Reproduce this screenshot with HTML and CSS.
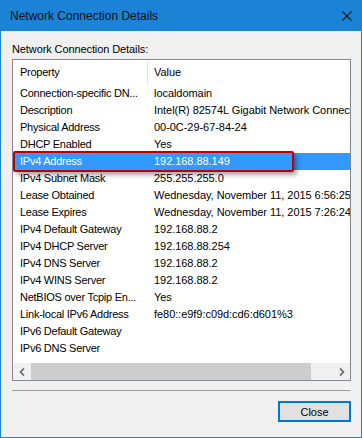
FILE: index.html
```html
<!DOCTYPE html>
<html lang="en">
<head>
    <meta charset="UTF-8">
    <title>Network Connection Details</title>
    <link rel="stylesheet" href="styles.css">
</head>
<body>
    <div class="window">
        <div class="titlebar">
            <span class="title">Network Connection Details</span>
            <svg class="close-x" width="10" height="10" viewBox="0 0 10 10">
                <path d="M0.5 0.5 L9.5 9.5 M9.5 0.5 L0.5 9.5" stroke="#1a1a1a" stroke-width="1.1" fill="none"/>
            </svg>
        </div>

        <div class="content">
            <p class="label">Network Connection Details:</p>

            <div class="listbox">
                <div class="list-head">
                    <div class="col-prop">Property</div>
                    <div class="col-val">Value</div>
                </div>

                <div class="rows">
                    <div class="row"><div class="col-prop">Connection-specific DN...</div><div class="col-val">localdomain</div></div>
                    <div class="row"><div class="col-prop">Description</div><div class="col-val">Intel(R) 82574L Gigabit Network Connection</div></div>
                    <div class="row"><div class="col-prop">Physical Address</div><div class="col-val">00-0C-29-67-84-24</div></div>
                    <div class="row"><div class="col-prop">DHCP Enabled</div><div class="col-val">Yes</div></div>
                    <div class="row selected"><div class="col-prop">IPv4 Address</div><div class="col-val">192.168.88.149</div></div>
                    <div class="row"><div class="col-prop">IPv4 Subnet Mask</div><div class="col-val">255.255.255.0</div></div>
                    <div class="row"><div class="col-prop">Lease Obtained</div><div class="col-val">Wednesday, November 11, 2015 6:56:25 PM</div></div>
                    <div class="row"><div class="col-prop">Lease Expires</div><div class="col-val">Wednesday, November 11, 2015 7:26:24 PM</div></div>
                    <div class="row"><div class="col-prop">IPv4 Default Gateway</div><div class="col-val">192.168.88.2</div></div>
                    <div class="row"><div class="col-prop">IPv4 DHCP Server</div><div class="col-val">192.168.88.254</div></div>
                    <div class="row"><div class="col-prop">IPv4 DNS Server</div><div class="col-val">192.168.88.2</div></div>
                    <div class="row"><div class="col-prop">IPv4 WINS Server</div><div class="col-val">192.168.88.2</div></div>
                    <div class="row"><div class="col-prop">NetBIOS over Tcpip En...</div><div class="col-val">Yes</div></div>
                    <div class="row"><div class="col-prop">Link-local IPv6 Address</div><div class="col-val">fe80::e9f9:c09d:cd6:d601%3</div></div>
                    <div class="row"><div class="col-prop">IPv6 Default Gateway</div><div class="col-val"></div></div>
                    <div class="row"><div class="col-prop">IPv6 DNS Server</div><div class="col-val"></div></div>
                </div>

                <!-- horizontal scrollbar -->
                <div class="hscroll">
                    <div class="arrow">
                        <svg width="6" height="8" viewBox="0 0 6 8"><path d="M5 0.5 L1.5 4 L5 7.5" stroke="#606060" stroke-width="1.6" fill="none"/></svg>
                    </div>
                    <div class="thumb"></div>
                    <div class="track"></div>
                    <div class="arrow">
                        <svg width="6" height="8" viewBox="0 0 6 8"><path d="M1 0.5 L4.5 4 L1 7.5" stroke="#606060" stroke-width="1.6" fill="none"/></svg>
                    </div>
                </div>

                <!-- red annotation round the selected row -->
                <div class="callout"></div>
            </div>

            <div class="separator"></div>

            <div class="buttons">
                <button class="btn">Close</button>
            </div>
        </div>
    </div>
</body>
</html>
```

FILE: styles.css
```css
body {
    margin: 0;
    font-family: "Liberation Sans", Arial, sans-serif;
    color: #000;
}
.window {
    width: 362px;
    height: 438px;
    box-sizing: border-box;
    border: 1px solid #1b82d6;
    border-top: 0;
    background-color: #f0f0f0;
}
.titlebar {
    height: 31px;
    margin: 0 -1px;
    padding: 0 10px 0 10px;
    background-color: #1b82d6;
    display: flex;
    align-items: center;
    justify-content: space-between;
}
.title {
    font-size: 12px;
    color: #111;
}
.content {
    padding: 12px 10px 0 11px;
}
.label {
    margin: 0 0 3px 0;
    font-size: 11px;
    line-height: 13px;
    letter-spacing: -0.1px;
}
.listbox {
    position: relative;
    height: 322px;
    box-sizing: border-box;
    border: 1px solid #828790;
    background-color: #fff;
    font-size: 11px;
    letter-spacing: -0.05px;
    overflow: hidden;
}
.list-head {
    display: flex;
    height: 25px;
    align-items: stretch;
}
.list-head .col-prop {
    border-right: 1px solid #e5e5e5;
    margin-top: 1px;
    line-height: 23px;
}
.list-head .col-val {
    line-height: 25px;
}
.rows {
    height: 278px;
}
.row {
    display: flex;
    height: 17px;
    line-height: 17px;
    white-space: nowrap;
}
.col-prop {
    width: 135px;
    flex-shrink: 0;
    box-sizing: border-box;
    padding-left: 7px;
    letter-spacing: -0.25px;
}
.col-val {
    padding-left: 6px;
    white-space: nowrap;
}
.row.selected {
    background-color: #3399ff;
    color: #fff;
}
.hscroll {
    display: flex;
    height: 17px;
    background-color: #f0f0f0;
}
.arrow {
    width: 17px;
    display: flex;
    align-items: center;
    justify-content: center;
}
.thumb {
    width: 280px;
    margin-left: 1px;
    background-color: #cdcdcd;
}
.track {
    flex: 1;
}
.callout {
    position: absolute;
    left: 0;
    top: 91px;
    width: 281px;
    height: 21px;
    box-sizing: border-box;
    border: 2px solid #c00000;
    border-radius: 2px;
    box-shadow: 3px 3px 4px rgba(0, 0, 0, 0.35);
}
.separator {
    margin: 9px 1px 0 0;
    height: 1px;
    background-color: #a0a0a0;
}
.buttons {
    display: flex;
    justify-content: flex-end;
    padding-top: 10px;
}
.btn {
    width: 73px;
    height: 21px;
    box-sizing: border-box;
    border: 2px solid #0078d7;
    background-color: #e1e1e1;
    font-family: "Liberation Sans", Arial, sans-serif;
    font-size: 11px;
    color: #000;
    padding: 0;
}
```
